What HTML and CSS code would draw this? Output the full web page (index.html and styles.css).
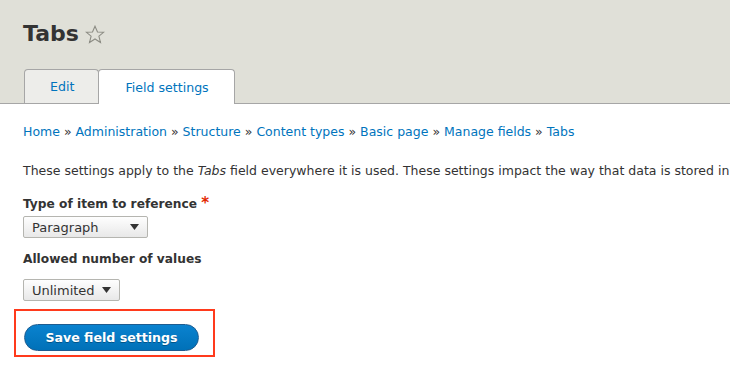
FILE: index.html
```html
<!DOCTYPE html>
<html>
<head>
<meta charset="utf-8">
<link rel="stylesheet" href="styles.css">
</head>
<body>
<div class="header">
  <h1 class="title">Tabs <svg class="star" width="20" height="19" viewBox="0 0 20 19"><path d="M10 1.2 L12.5 7 L18.6 7.3 L13.9 11.2 L15.5 17.5 L10 14 L4.5 17.5 L6.1 11.2 L1.4 7.3 L7.5 7 Z" fill="none" stroke="#8c8c84" stroke-width="1.1" stroke-linejoin="miter"/></svg></h1>
  <ul class="tabs">
    <li class="tab"><a>Edit</a></li>
    <li class="tab active"><a>Field settings</a></li>
  </ul>
</div>
<div class="content">
  <nav class="breadcrumb"><a>Home</a> » <a>Administration</a> » <a>Structure</a> » <a>Content types</a> » <a>Basic page</a> » <a>Manage fields</a> » <a>Tabs</a></nav>
  <p class="intro">These settings apply to the <em>Tabs</em> field everywhere it is used. These settings impact the way that data is stored in the database and cannot be changed once data has been created.</p>
  <div class="field">
    <label class="label">Type of item to reference <span class="req">*</span></label>
    <div class="select sel1"><span>Paragraph</span><svg width="9" height="6" viewBox="0 0 9 6"><path d="M0 0 H9 L4.5 6 Z" fill="#333"/></svg></div>
  </div>
  <div class="field field2">
    <label class="label">Allowed number of values</label>
    <div class="select sel2"><span>Unlimited</span><svg width="9" height="6" viewBox="0 0 9 6"><path d="M0 0 H9 L4.5 6 Z" fill="#333"/></svg></div>
  </div>
  <div class="actions">
    <button class="btn">Save field settings</button>
  </div>
</div>
</body>
</html>
```
FILE: styles.css
```css
html, body {
  margin: 0;
  padding: 0;
  background: #fff;
  overflow: hidden;
}
body {
  font-family: "DejaVu Sans", "Liberation Sans", sans-serif;
  font-size: 13px;
  color: #333;
  width: 730px;
  height: 382px;
}
.header {
  background: #e0e0d8;
  border-bottom: 1px solid #a6a6a6;
  padding: 0 0 0 24px;
  height: 103px;
  display: flex;
  flex-direction: column;
}
.title {
  margin: 21px 0 0 -1px;
  font-size: 22px;
  font-weight: bold;
  color: #333;
  line-height: 26px;
  height: 26px;
  display: flex;
  align-items: center;
  gap: 6px;
}
.star {
  margin-top: 1px;
}
.tabs {
  list-style: none;
  margin: auto 0 -1px 0;
  padding: 0;
  display: flex;
}
.tab {
  height: 33px;
  border: 1px solid #a6a6a6;
  border-bottom: none;
  border-radius: 4px 4px 0 0;
  background: #ededea;
  display: flex;
  align-items: center;
  padding: 0 24px 0 25px;
  margin-right: -1px;
  color: #0074bd;
  font-size: 12.6px;
}
.tab.active {
  background: #fff;
  height: 34px;
  padding: 0 25px 0 26px;
}
.tab a {
  color: #0074bd;
}
.content {
  padding: 0 23px;
}
.breadcrumb {
  margin-top: 20px;
  line-height: 16px;
  color: #333;
  white-space: nowrap;
  font-size: 12.5px;
}
.breadcrumb a {
  color: #0074bd;
}
.intro {
  margin: 23px 0 0 0;
  line-height: 16px;
  white-space: nowrap;
  font-size: 12.5px;
}
.field {
  margin-top: 16px;
  display: flex;
  flex-direction: column;
  align-items: flex-start;
}
.field2 {
  margin-top: 13px;
}
.label {
  font-weight: bold;
  line-height: 16px;
  color: #333;
  font-size: 12.2px;
}
.req {
  color: #e32700;
  font-size: 15px;
}
.select {
  box-sizing: border-box;
  height: 22px;
  border: 1px solid #b5b5b0;
  border-radius: 2px;
  background: linear-gradient(#fefefe, #e8e8e8);
  display: flex;
  align-items: center;
  justify-content: space-between;
  padding: 0 8px 0 8px;
  color: #333;
}
.sel1 {
  margin-top: 4px;
  width: 125px;
}
.sel2 {
  margin-top: 12px;
  width: 97px;
}
.actions {
  margin: 8px 0 0 -9px;
  width: 201px;
  height: 48px;
  box-sizing: border-box;
  border: 2px solid #ff3a1c;
  display: flex;
  align-items: flex-end;
  padding: 0 0 4px 8px;
}
.btn {
  box-sizing: border-box;
  width: 175px;
  height: 27px;
  border: 1px solid #1e5c90;
  border-radius: 20px;
  background: linear-gradient(#0a82cf, #0071b8);
  color: #fff;
  font-family: "DejaVu Sans", "Liberation Sans", sans-serif;
  font-weight: bold;
  font-size: 12.6px;
  text-shadow: 0 1px 0 rgba(0,0,0,0.3);
  padding: 0;
  cursor: pointer;
}
```
